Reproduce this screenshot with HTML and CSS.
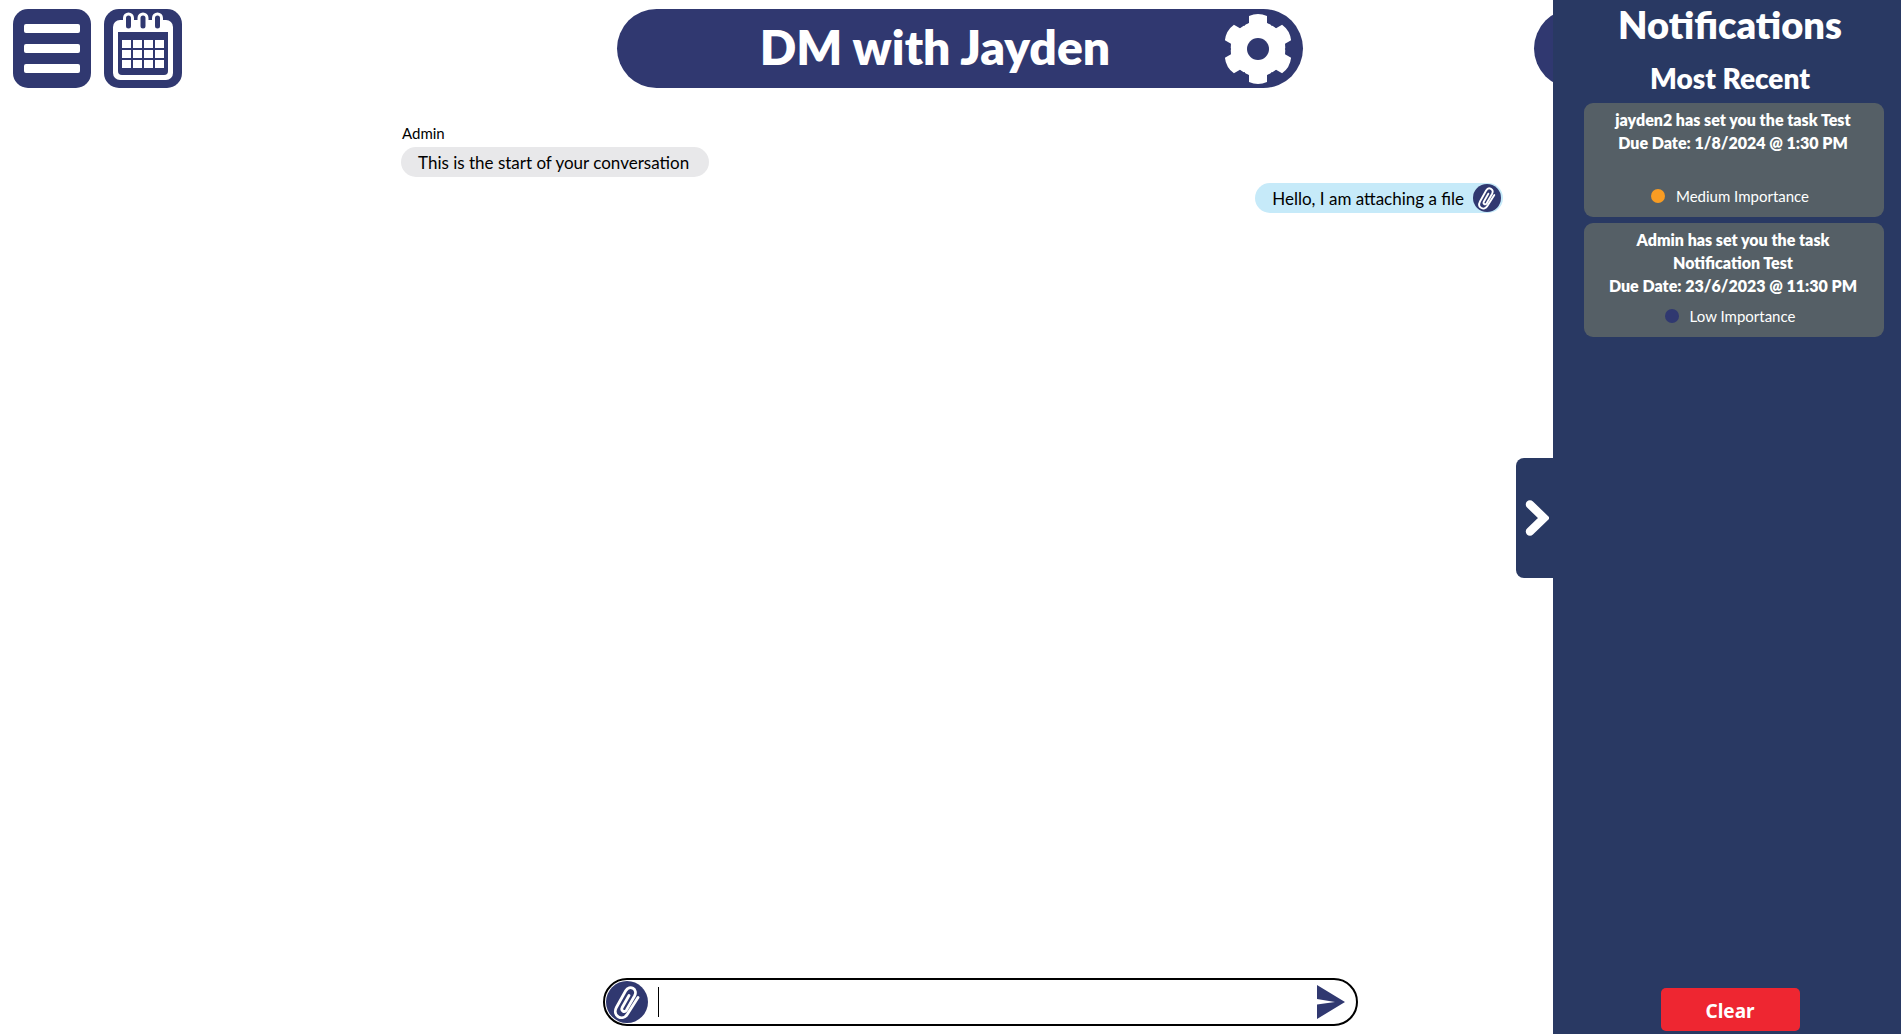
FILE: index.html
```html
<!DOCTYPE html>
<html lang="en">
<head>
<meta charset="utf-8">
<title>DM with Jayden</title>
<link rel="stylesheet" href="styles.css">
</head>
<body>
<svg class="symbols" aria-hidden="true">
  <symbol id="clip" viewBox="0 0 42 42">
    <circle cx="21" cy="21" r="21" fill="#303870"/>
    <path d="M23 14.500L16.200 26.500c-1.600 3.400 2.300 5.700 4.300 2.400L28.500 15c3.800-7-5-11.700-8.800-5.200L10.500 26.200c-4.800 9.400 6.600 14.300 11 6.800L32 16.500" fill="none" stroke="#fff" stroke-width="2.800" stroke-linecap="round"/>
  </symbol>
</svg>
<div class="app">
  <header class="topbar">
    <nav class="tools">
      <button class="tile" aria-label="Menu">
        <svg viewBox="0 0 78 79"><g fill="#fff"><rect x="11" y="15" width="56" height="9" rx="2"/><rect x="11" y="35" width="56" height="9" rx="2"/><rect x="11" y="55" width="56" height="9" rx="2"/></g></svg>
      </button>
      <button class="tile" aria-label="Calendar">
        <svg viewBox="0 0 78 79">
          <rect x="9" y="11" width="60" height="60" rx="7" fill="#fff"/>
          <path d="M14 23h50v39a4 4 0 0 1-4 4H18a4 4 0 0 1-4-4z" fill="#303870"/>
          <g fill="#303870" stroke="#fff" stroke-width="3"><rect x="20.500" y="5" width="8" height="16" rx="4"/><rect x="35" y="5" width="8" height="16" rx="4"/><rect x="49.500" y="5" width="8" height="16" rx="4"/></g>
          <path fill="#fff" d="M18 31h9v8h-9zM29 31h9v8h-9zM40 31h9v8h-9zM51 31h9v8h-9zM18 41h9v8h-9zM29 41h9v8h-9zM40 41h9v8h-9zM51 41h9v8h-9zM18 51h9v8h-9zM29 51h9v8h-9zM40 51h9v8h-9zM51 51h9v8h-9z"/>
        </svg>
      </button>
    </nav>
    <div class="title">
      <h1>DM with Jayden</h1>
      <button class="gear" aria-label="Settings">
        <svg viewBox="-35 -35 70 70">
          <g fill="#fff"><circle r="27"/>
            <path id="tooth" d="M-13-24L-9-26V-33Q0-37 9-33V-26L13-24V24L9 26V33Q0 37-9 33V26L-13 24z"/>
            <use href="#tooth" transform="rotate(60)"/><use href="#tooth" transform="rotate(120)"/>
          </g>
          <circle r="11" fill="#303870"/>
        </svg>
      </button>
    </div>
    <button class="alerts" aria-label="Notifications"></button>
  </header>
  <main class="chat">
    <section class="message">
      <p class="sender">Admin</p>
      <p class="bubble">This is the start of your conversation</p>
    </section>
    <section class="message own">
      <p class="bubble">Hello, I am attaching a file</p>
      <a class="file" href="#" aria-label="Attached file"><svg><use href="#clip"/></svg></a>
    </section>
  </main>
  <form class="composer">
    <button class="attach" type="button" aria-label="Attach a file"><svg><use href="#clip"/></svg></button>
    <span class="caret"></span>
    <input type="text" aria-label="Message">
    <button class="send" type="button" aria-label="Send"><svg viewBox="0 0 28 34"><path d="M0 0L28 17 0 34V19.500L18 17 0 14z" fill="#303870"/></svg></button>
  </form>
</div>
<aside class="panel">
  <button class="toggle" aria-label="Hide notifications"><svg viewBox="0 0 24 37"><path d="M5 5L19 18.500 5 32" fill="none" stroke="#fff" stroke-width="8.500" stroke-linecap="round"/></svg></button>
  <h2>Notifications</h2>
  <h3>Most Recent</h3>
  <ul class="cards">
    <li class="card">
      <p class="task">jayden2 has set you the task Test<br>Due Date: 1/8/2024 @ 1:30 PM</p>
      <p class="level"><span class="dot medium"></span>Medium Importance</p>
    </li>
    <li class="card">
      <p class="task">Admin has set you the task<br>Notification Test<br>Due Date: 23/6/2023 @ 11:30 PM</p>
      <p class="level"><span class="dot"></span>Low Importance</p>
    </li>
  </ul>
  <button class="clear">Clear</button>
</aside>
</body>
</html>
```
FILE: styles.css
```css
* { box-sizing: border-box; }
body, h1, h2, h3, p, ul { margin: 0; padding: 0; }
body {
  font-family: "Gill Sans MT", "Gill Sans", Lato, sans-serif;
  color: #000;
  background: #fff;
}
h1, h2, h3, .task { font-weight: 800; }
button { padding: 0; border: 0; cursor: pointer; font: inherit; background: none; }
svg { display: block; width: 100%; height: 100%; }
.symbols { position: absolute; width: 0; height: 0; }

.app { min-height: 100vh; display: flex; flex-direction: column; }

.topbar {
  display: grid;
  grid-template-columns: 604fr 686fr 585fr;
  padding: 9px 13px 0;
}
.tools { display: flex; gap: 13px; }
.tile { width: 78px; height: 79px; border-radius: 15px; background: #303870; }
.title {
  display: flex;
  align-items: center;
  height: 79px;
  padding: 0 10px 0 80px;
  border-radius: 40px;
  background: #303870;
  color: #fff;
}
h1 { flex: 1; padding: 0 50px 3px 0; text-align: center; font-size: 48px; line-height: 60px; }
.gear { width: 70px; height: 70px; }
.alerts { justify-self: end; width: 354px; height: 79px; border-radius: 40px; background: #303870; }

.chat {
  flex: 1;
  display: flex;
  flex-direction: column;
  gap: 6px;
  padding: 34px 398px 0 401px;
}
.message { align-self: flex-start; }
.sender { padding: 0 0 3px 1px; font-size: 15px; line-height: 22px; }
.bubble { padding: 1px 20px 0 17px; border-radius: 15px; font-size: 17px; line-height: 29px; background: #e8e8ea; }
.own { align-self: flex-end; display: flex; align-items: center; border-radius: 15px; padding-right: 2px; background: #c6eaf9; }
.own .bubble { padding-right: 9px; background: none; }
.file { width: 28px; height: 28px; }

.composer {
  display: flex;
  align-items: center;
  height: 48px;
  margin: 0 543px 8px 603px;
  padding: 0 11px 0 1px;
  border: 2px solid #000;
  border-radius: 24px;
}
.attach { width: 42px; height: 42px; }
.caret { width: 1px; height: 30px; margin-left: 10px; background: #000; }
.composer input { flex: 1; min-width: 0; border: 0; outline: 0; font: inherit; font-size: 18px; background: none; }
.send { width: 28px; height: 34px; }

.panel {
  position: fixed;
  top: 0;
  right: 0;
  bottom: 0;
  width: 348px;
  display: flex;
  flex-direction: column;
  align-items: center;
  padding: 2px 0 3px 6px;
  background: #293963;
  color: #fff;
}
.toggle {
  position: absolute;
  right: 100%;
  top: 458px;
  width: 37px;
  height: 120px;
  padding: 0 4px 0 9px;
  border-radius: 8px 0 0 8px;
  background: #293963;
}
h2 { font-size: 38px; line-height: 44px; }
h3 { padding-top: 14px; font-size: 28px; line-height: 36px; }
.cards { display: grid; gap: 6px; width: 300px; margin: 7px 0 0 8px; list-style: none; }
.card {
  display: flex;
  flex-direction: column;
  justify-content: space-between;
  height: 114px;
  padding: 5px 10px 9px 8px;
  border-radius: 9px;
  background: #555f66;
  text-align: center;
}
.task { font-size: 16px; line-height: 23px; }
.level { display: flex; justify-content: center; align-items: center; gap: 11px; padding-right: 6px; font-size: 15px; line-height: 24px; }
.dot { width: 14px; height: 14px; border-radius: 50%; background: #303870; }
.medium { background: #f89c23; }
.clear {
  width: 139px;
  height: 43px;
  margin-top: auto;
  padding-top: 3px;
  border-radius: 5px;
  background: #ee2631;
  color: #fff;
  font: 700 19px "Segoe UI", "Noto Sans", sans-serif;
}
```
